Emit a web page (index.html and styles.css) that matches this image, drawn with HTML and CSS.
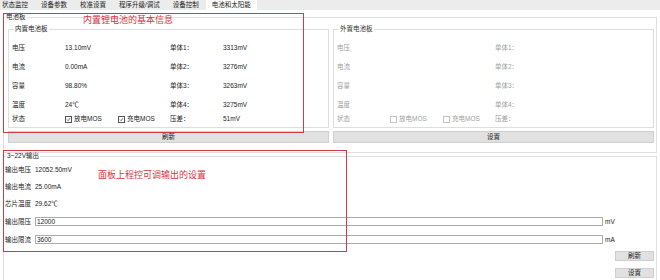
FILE: index.html
```html
<!DOCTYPE html>
<html lang="zh-CN">
<head>
    <meta charset="UTF-8">
    <meta name="viewport" content="width=device-width, initial-scale=1.0">
    <title>电池和太阳能</title>
    <link rel="stylesheet" href="styles.css">
</head>
<body>
    <div class="tabs">
        <span class="tab">状态监控</span>
        <span class="tab">设备参数</span>
        <span class="tab">校准设置</span>
        <span class="tab">程序升级/调试</span>
        <span class="tab">设备控制</span>
        <span class="tab active">电池和太阳能</span>
    </div>

    <div class="page">
        <fieldset class="group panel-group">
            <legend>电池板</legend>
            <div class="panels">
                <div class="panel">
                    <fieldset class="group battery">
                        <legend>内置电池板</legend>
                        <div class="row"><span>电压</span><span>13.10mV</span><span>单体1：</span><span>3313mV</span></div>
                        <div class="row"><span>电流</span><span>0.00mA</span><span>单体2：</span><span>3276mV</span></div>
                        <div class="row"><span>容量</span><span>98.80%</span><span>单体3：</span><span>3263mV</span></div>
                        <div class="row"><span>温度</span><span>24℃</span><span>单体4：</span><span>3275mV</span></div>
                        <div class="row last">
                            <span>状态</span>
                            <span class="checks">
                                <span class="check"><svg class="box" viewBox="0 0 6 6"><path d="M1.2 3.1 L2.5 4.4 L4.8 1.5"/></svg>放电MOS</span>
                                <span class="check"><svg class="box" viewBox="0 0 6 6"><path d="M1.2 3.1 L2.5 4.4 L4.8 1.5"/></svg>充电MOS</span>
                            </span>
                            <span>压差：</span><span>51mV</span>
                        </div>
                    </fieldset>
                    <button class="btn wide">刷新</button>
                </div>

                <div class="panel off">
                    <fieldset class="group battery">
                        <legend>外置电池板</legend>
                        <div class="row"><span>电压</span><span></span><span>单体1：</span><span></span></div>
                        <div class="row"><span>电流</span><span></span><span>单体2：</span><span></span></div>
                        <div class="row"><span>容量</span><span></span><span>单体3：</span><span></span></div>
                        <div class="row"><span>温度</span><span></span><span>单体4：</span><span></span></div>
                        <div class="row last">
                            <span>状态</span>
                            <span class="checks">
                                <span class="check"><svg class="box" viewBox="0 0 6 6"></svg>放电MOS</span>
                                <span class="check"><svg class="box" viewBox="0 0 6 6"></svg>充电MOS</span>
                            </span>
                            <span>压差：</span><span></span>
                        </div>
                    </fieldset>
                    <button class="btn wide">设置</button>
                </div>
            </div>
        </fieldset>

        <fieldset class="group output">
            <legend>3~22V输出</legend>
            <div class="out-row first"><span class="out-label">输出电压</span><span>12052.50mV</span></div>
            <div class="out-row"><span class="out-label">输出电流</span><span>25.00mA</span></div>
            <div class="out-row"><span class="out-label">芯片温度</span><span>29.62℃</span></div>
            <div class="out-row field"><span class="out-label">输出限压</span><input class="out-input" type="text" value="12000"><span class="unit">mV</span></div>
            <div class="out-row field"><span class="out-label">输出限流</span><input class="out-input" type="text" value="3600"><span class="unit">mA</span></div>
            <div class="out-actions">
                <button class="btn small">刷新</button>
                <button class="btn small">设置</button>
            </div>
        </fieldset>
    </div>

    <!-- annotation boxes drawn over the screenshot -->
    <div class="note note-battery"><span>内置锂电池的基本信息</span></div>
    <div class="note note-output"><span>面板上程控可调输出的设置</span></div>
</body>
</html>
```

FILE: styles.css
```css
* {
    box-sizing: border-box;
}

body {
    margin: 0;
    width: 660px;
    height: 280px;
    overflow: hidden;
    position: relative;
    background: #fff;
    font-family: "Liberation Sans", "Noto Sans CJK SC", sans-serif;
    font-size: 6.5px;
    line-height: 8px;
    color: #222;
}

/* tab bar */
.tabs {
    display: flex;
    height: 10px;
    background: #ececec;
}

.tab {
    padding: 0 6px;
    margin-right: 1px;
    line-height: 10px;
    color: #222;
}

.tab:first-child {
    padding-left: 2px;
}

.tab.active {
    background: #fff;
    padding: 0 6px;
}

.page {
    padding: 3px 3px 0 3px;
}

/* group boxes */
.group {
    margin: 0;
    padding: 0;
    min-width: 0;
    border: 1px solid #dedede;
}

.group legend {
    padding: 0 1px;
    margin-left: 1px;
    line-height: 8px;
}

.panels {
    display: grid;
    grid-template-columns: 1fr 1fr;
    gap: 4px;
    padding: 4px 2px 9px 4px;
}

.panel {
    display: flex;
    flex-direction: column;
}

.battery {
    padding: 5px 0 3px 3px;
}

.battery legend {
    margin-left: 2px;
}

.row {
    display: grid;
    grid-template-columns: 53px 105px 53px 1fr;
    align-items: center;
    height: 19px;
}

.row.last {
    height: 10px;
}

.checks {
    display: flex;
    gap: 5px;
}

.check {
    display: flex;
    align-items: center;
    gap: 2px;
    width: 48px;
}

.box {
    width: 7px;
    height: 7px;
    border: 1px solid #555;
    background: #fff;
}

.box path {
    fill: none;
    stroke: #333;
    stroke-width: 0.9;
}

.panel.off {
    color: #a0a0a0;
}

.panel.off legend {
    color: #333;
}

.panel.off .box {
    border-color: #c4c4c4;
}

.btn {
    font-family: inherit;
    font-size: 6.5px;
    line-height: 8px;
    color: #222;
    background: #e1e1e1;
    border: 1px solid #cfcfcf;
    padding: 0;
    margin: 0;
}

.btn.wide {
    height: 12px;
    margin-top: 3px;
}

/* output group */
.output {
    margin-top: -1px;
    height: 130px;
    padding: 6px 0 0 1px;
}

.out-row {
    display: flex;
    align-items: center;
    height: 8px;
    margin-top: 9px;
}

.out-row.first {
    margin-top: 0;
}

.out-label {
    width: 30px;
}

.out-row.field {
    height: 9px;
    padding-right: 40px;
}

.out-input {
    flex: 1;
    height: 9px;
    margin: 0;
    padding: 0 1px;
    border: 1px solid #ababab;
    font-family: inherit;
    font-size: 6.5px;
    color: #222;
    outline: none;
}

.unit {
    width: 11px;
    margin-left: 2px;
}

.out-actions {
    display: flex;
    flex-direction: column;
    align-items: flex-end;
    gap: 7px;
    margin-top: 7px;
    padding-right: 2px;
}

.btn.small {
    width: 39px;
    height: 10px;
}

/* red annotations */
.note {
    position: absolute;
    border: 1px solid #cf3b49;
    color: #d9343f;
    font-size: 9px;
    line-height: 10px;
}

.note span {
    position: absolute;
}

.note-battery {
    left: 3px;
    top: 13px;
    width: 301px;
    height: 120px;
}

.note-battery span {
    left: 79px;
    top: 1px;
}

.note-output {
    left: 3px;
    top: 150px;
    width: 344px;
    height: 102px;
}

.note-output span {
    left: 94px;
    top: 19px;
}
```
